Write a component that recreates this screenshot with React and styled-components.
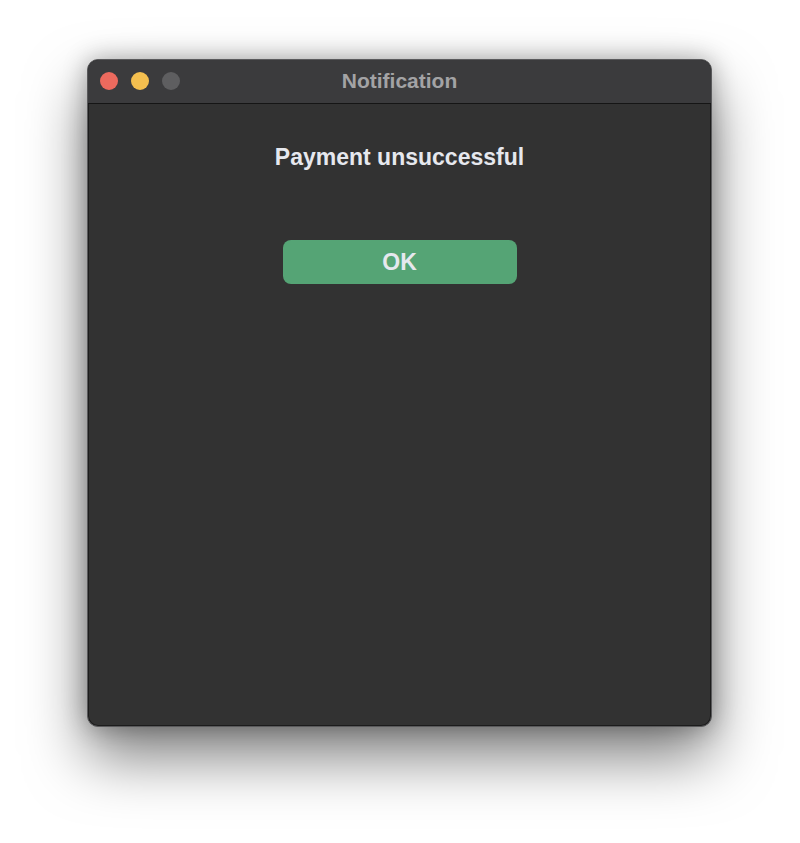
import React from 'react'
import styled, { createGlobalStyle } from 'styled-components'

const GlobalStyle = createGlobalStyle`
  html, body {
    margin: 0;
    padding: 0;
    background: #ffffff;
  }
  body {
    font-family: "Liberation Sans", Arial, sans-serif;
  }
`

const Page = styled.div`
  width: 800px;
  height: 843px;
  box-sizing: border-box;
  padding: 59px 88px 0 87px;
  background: #ffffff;
  overflow: hidden;
`

const Window = styled.div`
  width: 625px;
  height: 668px;
  box-sizing: border-box;
  display: flex;
  flex-direction: column;
  background: #323232;
  border-radius: 11px;
  border: 1px solid #5a5a5c;
  box-shadow: 0 0 0 1px #1c1c1c inset, 0 30px 60px rgba(0, 0, 0, 0.5), 0 0 24px rgba(0, 0, 0, 0.3);
  overflow: hidden;
`

const TitleBar = styled.div`
  position: relative;
  height: 43px;
  flex: none;
  display: flex;
  align-items: center;
  justify-content: center;
  background: #3b3b3d;
  border-bottom: 1px solid #151515;
`

const Lights = styled.div`
  position: absolute;
  left: 12px;
  top: 12px;
  display: flex;
  gap: 13px;
`

const Light = styled.span`
  width: 18px;
  height: 18px;
  border-radius: 50%;
  background: ${props => props.color};
`

const Title = styled.div`
  font-weight: 700;
  font-size: 21px;
  color: #a3a3a5;
  margin-top: -1px;
`

const Body = styled.div`
  flex: 1;
  display: flex;
  flex-direction: column;
  align-items: center;
  padding-top: 39px;
`

const Message = styled.div`
  font-weight: 700;
  font-size: 23px;
  color: #e6e8ee;
  line-height: 28px;
`

const OkButton = styled.button`
  margin-top: 69px;
  width: 234px;
  height: 44px;
  border: none;
  border-radius: 8px;
  background: #55a475;
  color: #e6e8ee;
  font-family: "Liberation Sans", Arial, sans-serif;
  font-weight: 700;
  font-size: 23px;
  cursor: pointer;
`

export default function App () {
  return (
    <Page>
      <GlobalStyle/>
      <Window>
        <TitleBar>
          <Lights>
            <Light color='#ec6a5e'/>
            <Light color='#f4bf4f'/>
            <Light color='#5e5e60'/>
          </Lights>
          <Title>Notification</Title>
        </TitleBar>
        <Body>
          <Message>Payment unsuccessful</Message>
          <OkButton>OK</OkButton>
        </Body>
      </Window>
    </Page>
  )
}
